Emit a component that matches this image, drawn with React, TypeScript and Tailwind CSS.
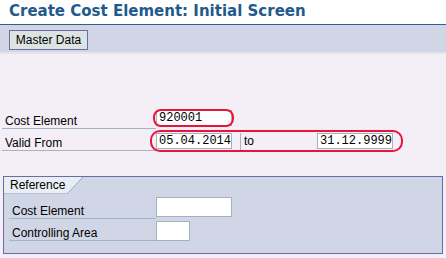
import React from 'react';

const labelFont = { fontFamily: '"Liberation Sans", Arial, sans-serif' };

const Field = ({ value, width }: { value?: string; width: string }) => (
  <div
    className={`${width} h-[16px] bg-white border border-[#a3b2bf] px-[2px] text-[12px] leading-[14px] text-black font-['Liberation_Mono',monospace]`}
  >
    {value}
  </div>
);

const Mark = ({ className }: { className: string }) => (
  <div className={`absolute border-2 border-[#e8143c] pointer-events-none ${className}`} />
);

export default function App() {
  return (
    <div
      className="w-[446px] h-[258px] overflow-hidden bg-[#f4eef6] flex flex-col text-[12px] text-black"
      style={labelFont}
    >
      {/* Title */}
      <div className="h-[25px] bg-white border-b border-[#2b6090] flex items-center pl-[9px]">
        <h1 className="text-[15px] font-bold text-[#215a8c] font-['DejaVu_Sans',sans-serif] leading-[18px] pb-[2px]">
          Create Cost Element: Initial Screen
        </h1>
      </div>

      {/* Application toolbar */}
      <div className="h-[29px] bg-[#d0d6e6] border-b-2 border-[#e3e5ea] flex items-start pl-[9px] pt-[5px]">
        <button className="w-[79px] h-[20px] bg-[#dde3e3] border border-[#6e6ea6] text-[12px] leading-[18px] text-black">
          Master Data
        </button>
      </div>

      {/* Selection fields */}
      <div className="pt-[53px] pl-[2px] relative">
        <div className="flex h-[22px]">
          <div className="w-[154px] border-b border-[#a3b4c4] pl-[3px] pt-[5px]">Cost Element</div>
          <div className="relative pt-[3px]">
            <Field value="920001" width="w-[76px]" />
            <Mark className="left-[-3px] right-[-2px] top-[2px] h-[18px] rounded-[8px]" />
          </div>
        </div>
        <div className="flex h-[22px]">
          <div className="w-[154px] border-b border-[#a3b4c4] pl-[3px] pt-[5px]">Valid From</div>
          <div className="relative flex pt-[4px]">
            <Field value="05.04.2014" width="w-[76px]" />
            <div className="ml-[8px] w-[77px] h-[18px] border-l border-b border-[#a3b4c4] pl-[3px] leading-[16px]">to</div>
            <Field value="31.12.9999" width="w-[76px]" />
            <Mark className="left-[-6px] right-[-10px] top-[1px] h-[22px] rounded-[10px]" />
          </div>
        </div>
      </div>

      {/* Reference group */}
      <div className="mt-[25px] ml-[3px] w-[440px] h-[78px] border border-[#6b6baa] bg-[#d0d6e6] relative">
        <div className="absolute left-0 top-0 h-[17px] w-[80px]">
          <svg width="80" height="17" className="absolute left-0 top-0">
            <polygon points="0,0 79,0 63,17 0,17" fill="#e9eef5" />
            <polyline points="79,0 63,17" stroke="#9aa7c6" strokeWidth="1" fill="none" />
            <line x1="0" y1="16.5" x2="63" y2="16.5" stroke="#b7c0d6" strokeWidth="1" />
          </svg>
          <span className="relative block pl-[6px] leading-[16px]">Reference</span>
        </div>
        <div className="pt-[20px] pl-[5px]">
          <div className="flex h-[22px]">
            <div className="w-[147px] border-b border-[#a3b4c4] pl-[3px] pt-[5px]">Cost Element</div>
            <div className="w-[76px] h-[20px] bg-white border border-[#a3b2bf]" />
          </div>
          <div className="flex h-[22px]">
            <div className="w-[147px] border-b border-[#a3b4c4] pl-[3px] pt-[5px]">Controlling Area</div>
            <div className="w-[34px] h-[20px] mt-[2px] bg-white border border-[#a3b2bf]" />
          </div>
        </div>
      </div>
    </div>
  );
}
